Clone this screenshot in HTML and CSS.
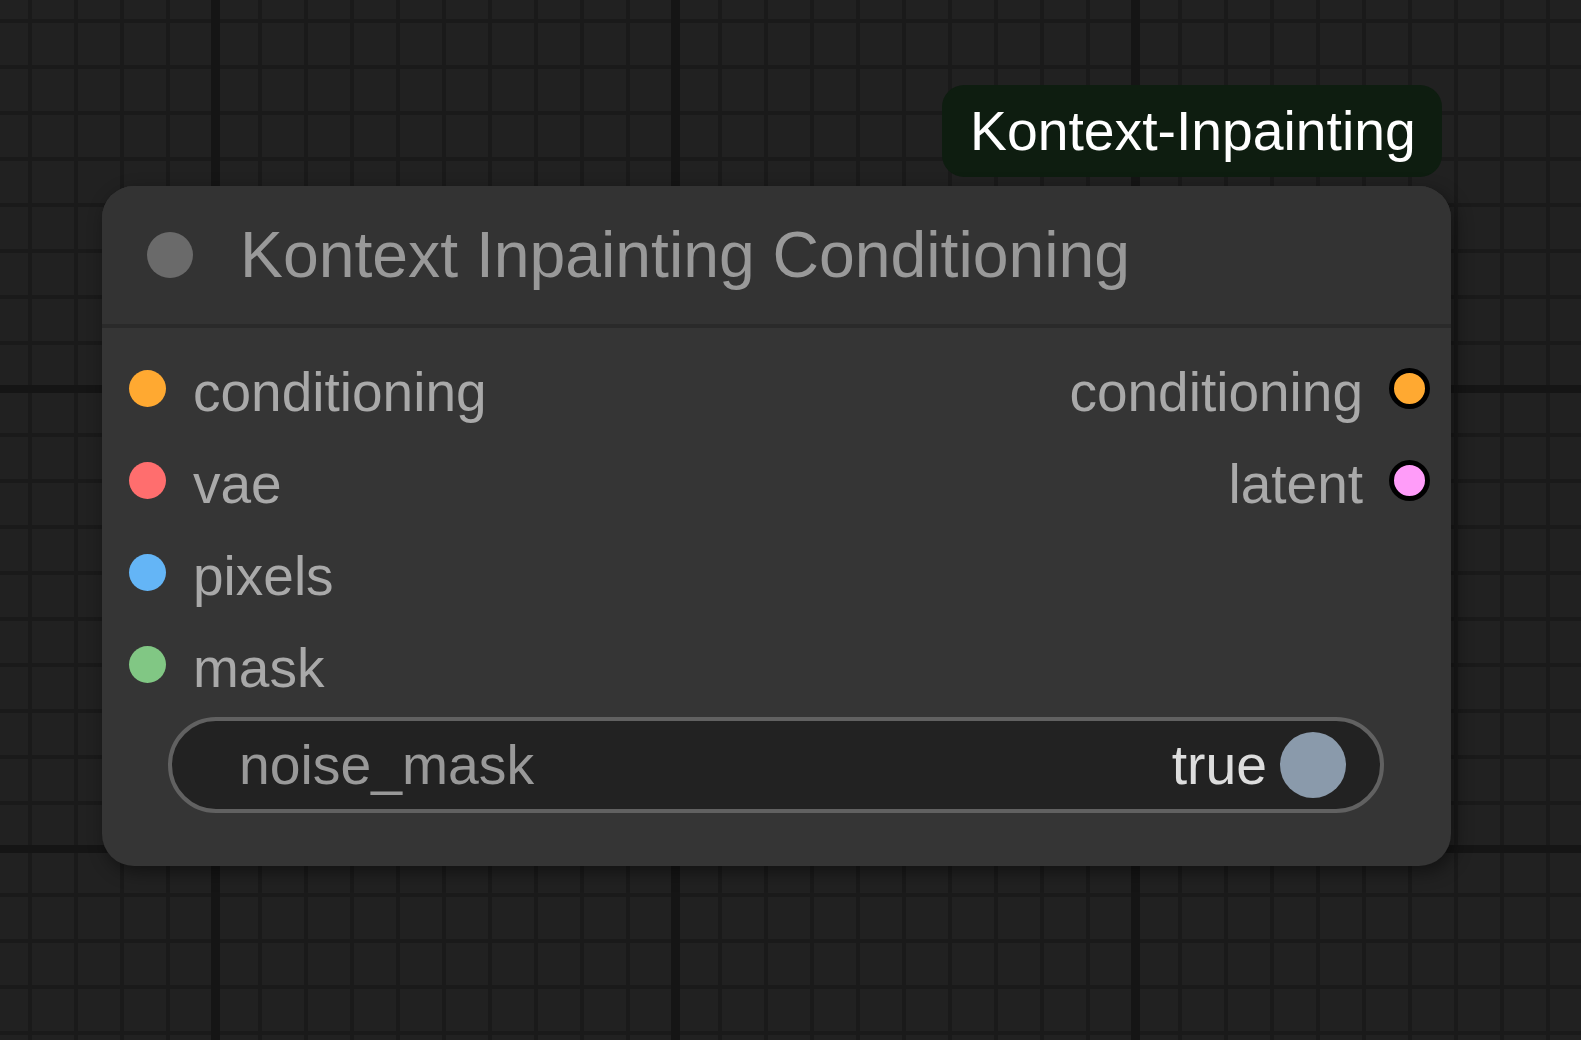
FILE: index.html
```html
<!DOCTYPE html>
<html lang="en">
<head>
<meta charset="utf-8">
<title>Kontext Inpainting Conditioning</title>
<link rel="stylesheet" href="styles.css">
</head>
<body>
<div class="canvas">
  <div class="badge">Kontext-Inpainting</div>
  <div class="node">
    <div class="node-header">
      <span class="header-dot"></span>
      <span class="node-title">Kontext Inpainting Conditioning</span>
    </div>
    <div class="node-body">
      <div class="slot-row">
        <div class="slot slot-in"><span class="dot dot-cond"></span><span class="label">conditioning</span></div>
        <div class="slot slot-out"><span class="label">conditioning</span><span class="odot dot-cond"></span></div>
      </div>
      <div class="slot-row">
        <div class="slot slot-in"><span class="dot dot-vae"></span><span class="label">vae</span></div>
        <div class="slot slot-out"><span class="label">latent</span><span class="odot dot-latent"></span></div>
      </div>
      <div class="slot-row">
        <div class="slot slot-in"><span class="dot dot-pixels"></span><span class="label">pixels</span></div>
      </div>
      <div class="slot-row">
        <div class="slot slot-in"><span class="dot dot-mask"></span><span class="label">mask</span></div>
      </div>
      <div class="widget">
        <span class="widget-name">noise_mask</span>
        <span class="widget-value">true</span>
        <span class="knob"></span>
      </div>
    </div>
  </div>
</div>
</body>
</html>
```
FILE: styles.css
```css
html, body {
  margin: 0;
  padding: 0;
}
body {
  width: 1581px;
  height: 1040px;
  overflow: hidden;
  font-family: "Liberation Sans", Arial, sans-serif;
  background-color: #212121;
  background-image:
    linear-gradient(90deg, #151515 9px, transparent 9px),
    linear-gradient(180deg, #151515 8px, transparent 8px),
    linear-gradient(90deg, #1a1a1a 4px, transparent 4px),
    linear-gradient(180deg, #1a1a1a 4px, transparent 4px);
  background-size: 460px 100%, 100% 460px, 46px 46px, 46px 46px;
  background-position: 211px 0, 0 385px, 28px 0, 0 19px;
}
.canvas {
  position: relative;
  width: 1581px;
  height: 1040px;
}
.badge {
  position: absolute;
  left: 942px;
  top: 85px;
  height: 92px;
  padding: 0 26px 0 28px;
  display: flex;
  align-items: center;
  background: #0e1d10;
  border-radius: 22px;
  color: #ffffff;
  font-size: 55.3px;
  white-space: nowrap;
}
.node {
  position: absolute;
  left: 102px;
  top: 186px;
  width: 1349px;
  height: 680px;
  background: #353535;
  border-radius: 32px;
  box-shadow: 4px 6px 18px rgba(0, 0, 0, 0.45);
  display: flex;
  flex-direction: column;
}
.node-header {
  height: 138px;
  flex: none;
  background: #333333;
  border-radius: 32px 32px 0 0;
  border-bottom: 4px solid #2a2a2a;
  display: flex;
  align-items: center;
  padding-left: 45px;
  gap: 47px;
}
.header-dot {
  width: 46px;
  height: 46px;
  border-radius: 50%;
  background: #6a6a6a;
  flex: none;
}
.node-title {
  color: #999999;
  font-size: 64.3px;
  white-space: nowrap;
}
.node-body {
  padding-top: 14px;
  display: flex;
  flex-direction: column;
}
.slot-row {
  height: 92px;
  display: flex;
  justify-content: space-between;
  align-items: center;
}
.slot {
  display: flex;
  align-items: center;
}
.slot-in {
  padding-left: 27px;
  gap: 27px;
}
.slot-out {
  padding-right: 21px;
  gap: 26px;
}
.label {
  color: #a9a9a9;
  font-size: 55px;
  line-height: 1;
  padding-top: 8px;
  white-space: nowrap;
}
.dot {
  width: 37px;
  height: 37px;
  border-radius: 50%;
  flex: none;
}
.odot {
  width: 41px;
  height: 41px;
  box-sizing: border-box;
  border: 5px solid #000000;
  border-radius: 50%;
  flex: none;
}
.dot-cond { background: #ffa931; }
.dot-vae { background: #ff6e6e; }
.dot-pixels { background: #64b5f6; }
.dot-mask { background: #81c784; }
.dot-latent { background: #ff9cf9; }
.widget {
  margin: 7px 67px 0 66px;
  height: 96px;
  box-sizing: border-box;
  border: 4px solid #616161;
  border-radius: 48px;
  background: #222222;
  display: flex;
  align-items: center;
  padding: 0 34px 0 67px;
}
.widget-name {
  color: #999999;
  font-size: 55.3px;
  flex: 1;
  white-space: nowrap;
}
.widget-value {
  color: #dddddd;
  font-size: 55.3px;
  margin-right: 13px;
}
.knob {
  width: 66px;
  height: 66px;
  border-radius: 50%;
  background: #8a9aab;
  flex: none;
}
```
